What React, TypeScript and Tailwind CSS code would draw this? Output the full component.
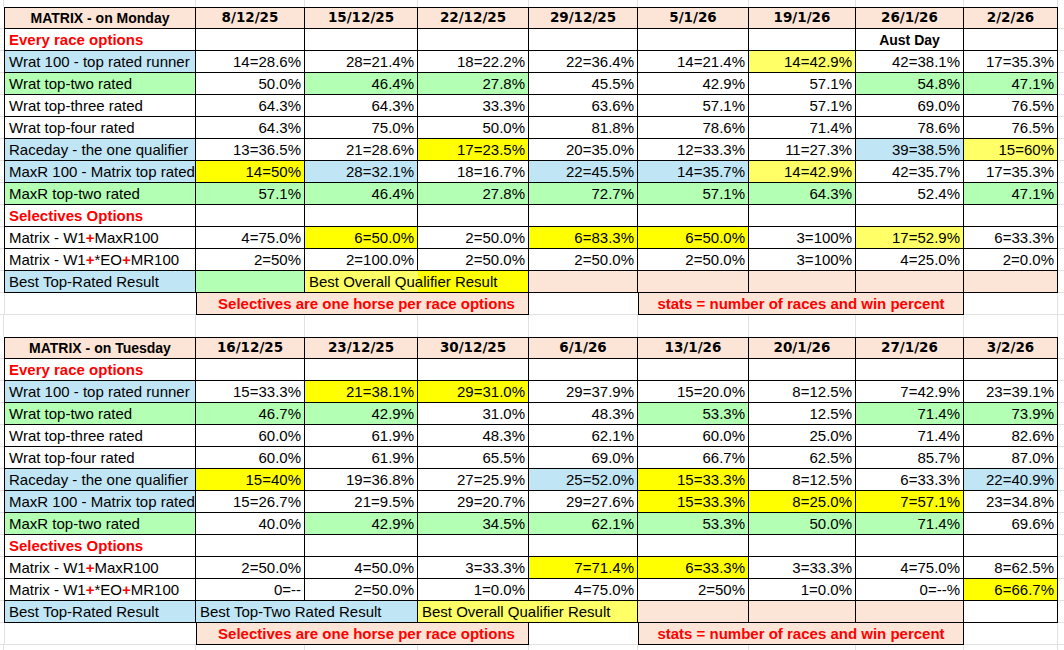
import React from 'react';

const BG: Record<string, string> = {
  y: 'bg-[#ffff00]',
  p: 'bg-[#ffff66]',
  b: 'bg-[#c0e6f5]',
  g: 'bg-[#b3ffb3]',
  k: 'bg-[#fce4d6]',
  w: 'bg-white',
};

const GRID =
  'grid grid-cols-[4px_192px_109px_113px_111px_109px_111px_107px_108px_94px_1fr]';

const BASE = 'h-[22px] flex items-center whitespace-nowrap';
const DATEF = "font-['DejaVu_Sans',sans-serif] font-bold text-[13.5px]";
const RED = 'text-[#ff0000] font-bold';

type Row = { label: React.ReactNode; lbg: string; cells: string[] };

const Plus = () => <span className={RED}>+</span>;

function Spacer({ h = 'h-[22px]' }: { h?: string }) {
  return <div className={`${h} border-b border-[#e1e1e1]`} />;
}

function DataCell({ s }: { s: string }) {
  let bg = 'bg-white';
  let t = s;
  const m = s.match(/^([ypbgk]):(.*)$/);
  if (m) {
    bg = BG[m[1]];
    t = m[2];
  }
  return (
    <div className={`${BASE} justify-end pr-[3px] border-r border-b border-black ${bg}`}>
      {t}
    </div>
  );
}

function LabelCell({ children, bg }: { children: React.ReactNode; bg: string }) {
  return (
    <div className={`${BASE} justify-start pl-[4px] border-l border-r border-b border-black ${bg}`}>
      {children}
    </div>
  );
}

function Table({
  title,
  dates,
  rows,
  variant,
}: {
  title: string;
  dates: string[];
  rows: Row[];
  variant: 'mon' | 'tue';
}) {
  const out: React.ReactNode[] = [];
  // header
  out.push(<Spacer key="h-l" />);
  out.push(
    <div
      key="h-t"
      className={`${BASE} justify-center border-l border-t border-r border-b border-black bg-[#fce4d6] font-bold text-[14px]`}
    >
      {title}
    </div>
  );
  dates.forEach((d, i) =>
    out.push(
      <div
        key={`h-${i}`}
        className={`${BASE} justify-center border-t border-r border-b border-black bg-[#fce4d6] ${DATEF}`}
      >
        {d}
      </div>
    )
  );
  out.push(<Spacer key="h-r" />);

  rows.forEach((r, ri) => {
    out.push(<Spacer key={`r${ri}-l`} />);
    out.push(
      <LabelCell key={`r${ri}-lab`} bg={r.lbg}>
        {r.label}
      </LabelCell>
    );
    r.cells.forEach((c, ci) => {
      if (c === 'AUST') {
        out.push(
          <div
            key={`r${ri}-${ci}`}
            className={`${BASE} justify-center border-r border-b border-black bg-white font-bold text-[14px]`}
          >
            Aust Day
          </div>
        );
      } else {
        out.push(<DataCell key={`r${ri}-${ci}`} s={c} />);
      }
    });
    out.push(<Spacer key={`r${ri}-r`} />);
  });

  // Best row
  out.push(<Spacer key="b-l" />);
  out.push(
    <LabelCell key="b-lab" bg={BG.b}>
      Best Top-Rated Result
    </LabelCell>
  );
  if (variant === 'mon') {
    out.push(<div key="b-1" className={`${BASE} border-r border-b border-black ${BG.g}`} />);
    out.push(
      <div
        key="b-2"
        className={`${BASE} col-span-2 justify-start pl-[4px] border-r border-b border-black bg-[linear-gradient(to_right,#ffff66_113px,#ffff00_113px)]`}
      >
        Best Overall Qualifier Result
      </div>
    );
    [0, 1, 2, 3, 4].forEach((i) =>
      out.push(<div key={`b-p${i}`} className={`${BASE} border-r border-b border-black ${BG.k}`} />)
    );
  } else {
    out.push(
      <div
        key="b-1"
        className={`${BASE} col-span-2 justify-start pl-[4px] border-r border-b border-black ${BG.b}`}
      >
        Best Top-Two Rated Result
      </div>
    );
    out.push(
      <div
        key="b-2"
        className={`${BASE} col-span-2 justify-start pl-[4px] border-r border-b border-black ${BG.p}`}
      >
        Best Overall Qualifier Result
      </div>
    );
    [0, 1, 2].forEach((i) =>
      out.push(<div key={`b-p${i}`} className={`${BASE} border-r border-b border-black ${BG.k}`} />)
    );
    out.push(<div key="b-w" className={`${BASE} border-r border-b border-black bg-white`} />);
  }
  out.push(<Spacer key="b-r" />);

  // notes row
  out.push(<Spacer key="n-l" />);
  out.push(<div key="n-0" className="h-[22px] border-l border-b border-[#e1e1e1]" />);
  out.push(
    <div
      key="n-1"
      className={`${BASE} col-span-3 justify-center border-l border-r border-b border-black ${BG.k} ${RED} pl-[8px]`}
    >
      Selectives are one horse per race options
    </div>
  );
  out.push(<div key="n-2" className="h-[22px] border-b border-[#e1e1e1]" />);
  out.push(
    <div
      key="n-3"
      className={`${BASE} col-span-3 justify-center border-l border-r border-b border-black ${BG.k} ${RED}`}
    >
      stats = number of races and win percent
    </div>
  );
  out.push(<div key="n-4" className="h-[22px] border-r border-b border-[#e1e1e1]" />);
  out.push(<Spacer key="n-r" />);

  return <>{out}</>;
}

function GridStrip({ h, k }: { h: string; k: string }) {
  const cells: React.ReactNode[] = [];
  cells.push(<div key={`${k}-l`} className={`${h} border-r border-[#e1e1e1]`} />);
  for (let i = 0; i < 9; i++) {
    cells.push(<div key={`${k}-${i}`} className={`${h} border-r border-[#e1e1e1]`} />);
  }
  cells.push(<div key={`${k}-r`} className={h} />);
  return <>{cells}</>;
}

const monRows: Row[] = [
  { label: <span className={RED}>Every race options</span>, lbg: BG.w, cells: ['', '', '', '', '', '', 'AUST', ''] },
  {
    label: 'Wrat 100 - top rated runner',
    lbg: BG.b,
    cells: ['14=28.6%', '28=21.4%', '18=22.2%', '22=36.4%', '14=21.4%', 'p:14=42.9%', '42=38.1%', '17=35.3%'],
  },
  {
    label: 'Wrat top-two rated',
    lbg: BG.g,
    cells: ['50.0%', 'g:46.4%', 'g:27.8%', '45.5%', '42.9%', '57.1%', 'g:54.8%', 'g:47.1%'],
  },
  {
    label: 'Wrat top-three rated',
    lbg: BG.w,
    cells: ['64.3%', '64.3%', '33.3%', '63.6%', '57.1%', '57.1%', '69.0%', '76.5%'],
  },
  {
    label: 'Wrat top-four rated',
    lbg: BG.w,
    cells: ['64.3%', '75.0%', '50.0%', '81.8%', '78.6%', '71.4%', '78.6%', '76.5%'],
  },
  {
    label: 'Raceday - the one qualifier',
    lbg: BG.b,
    cells: ['13=36.5%', '21=28.6%', 'y:17=23.5%', '20=35.0%', '12=33.3%', '11=27.3%', 'b:39=38.5%', 'p:15=60%'],
  },
  {
    label: 'MaxR 100 - Matrix top rated',
    lbg: BG.b,
    cells: ['y:14=50%', 'b:28=32.1%', '18=16.7%', 'b:22=45.5%', 'b:14=35.7%', 'p:14=42.9%', '42=35.7%', '17=35.3%'],
  },
  {
    label: 'MaxR top-two rated',
    lbg: BG.g,
    cells: ['g:57.1%', 'g:46.4%', 'g:27.8%', 'g:72.7%', 'g:57.1%', 'g:64.3%', '52.4%', 'g:47.1%'],
  },
  { label: <span className={RED}>Selectives Options</span>, lbg: BG.w, cells: ['', '', '', '', '', '', '', ''] },
  {
    label: (
      <span>
        Matrix - W1<Plus />MaxR100
      </span>
    ),
    lbg: BG.w,
    cells: ['4=75.0%', 'y:6=50.0%', '2=50.0%', 'y:6=83.3%', 'y:6=50.0%', '3=100%', 'p:17=52.9%', '6=33.3%'],
  },
  {
    label: (
      <span>
        Matrix - W1<Plus />*EO<Plus />MR100
      </span>
    ),
    lbg: BG.w,
    cells: ['2=50%', '2=100.0%', '2=50.0%', '2=50.0%', '2=50.0%', '3=100%', '4=25.0%', '2=0.0%'],
  },
];

const tueRows: Row[] = [
  { label: <span className={RED}>Every race options</span>, lbg: BG.w, cells: ['', '', '', '', '', '', '', ''] },
  {
    label: 'Wrat 100 - top rated runner',
    lbg: BG.b,
    cells: ['15=33.3%', 'y:21=38.1%', 'y:29=31.0%', '29=37.9%', '15=20.0%', '8=12.5%', '7=42.9%', '23=39.1%'],
  },
  {
    label: 'Wrat top-two rated',
    lbg: BG.g,
    cells: ['g:46.7%', 'g:42.9%', '31.0%', '48.3%', 'g:53.3%', '12.5%', 'g:71.4%', 'g:73.9%'],
  },
  {
    label: 'Wrat top-three rated',
    lbg: BG.w,
    cells: ['60.0%', '61.9%', '48.3%', '62.1%', '60.0%', '25.0%', '71.4%', '82.6%'],
  },
  {
    label: 'Wrat top-four rated',
    lbg: BG.w,
    cells: ['60.0%', '61.9%', '65.5%', '69.0%', '66.7%', '62.5%', '85.7%', '87.0%'],
  },
  {
    label: 'Raceday - the one qualifier',
    lbg: BG.b,
    cells: ['y:15=40%', '19=36.8%', '27=25.9%', 'b:25=52.0%', 'y:15=33.3%', '8=12.5%', '6=33.3%', 'b:22=40.9%'],
  },
  {
    label: 'MaxR 100 - Matrix top rated',
    lbg: BG.b,
    cells: ['15=26.7%', '21=9.5%', '29=20.7%', '29=27.6%', 'y:15=33.3%', 'y:8=25.0%', 'y:7=57.1%', '23=34.8%'],
  },
  {
    label: 'MaxR top-two rated',
    lbg: BG.g,
    cells: ['40.0%', 'g:42.9%', 'g:34.5%', 'g:62.1%', 'g:53.3%', 'g:50.0%', 'g:71.4%', '69.6%'],
  },
  { label: <span className={RED}>Selectives Options</span>, lbg: BG.w, cells: ['', '', '', '', '', '', '', ''] },
  {
    label: (
      <span>
        Matrix - W1<Plus />MaxR100
      </span>
    ),
    lbg: BG.w,
    cells: ['2=50.0%', '4=50.0%', '3=33.3%', 'y:7=71.4%', 'y:6=33.3%', '3=33.3%', '4=75.0%', '8=62.5%'],
  },
  {
    label: (
      <span>
        Matrix - W1<Plus />*EO<Plus />MR100
      </span>
    ),
    lbg: BG.w,
    cells: ['0=--', '2=50.0%', '1=0.0%', '4=75.0%', '2=50%', '1=0.0%', '0=--%', 'y:6=66.7%'],
  },
];

export default function App() {
  return (
    <div className="w-[1064px] h-[650px] overflow-hidden bg-white text-black font-['Liberation_Sans',Arial,sans-serif] text-[15px] leading-none">
      <div className={GRID}>
        <GridStrip h="h-[7px]" k="top" />
        <Table
          title="MATRIX - on Monday"
          dates={['8/12/25', '15/12/25', '22/12/25', '29/12/25', '5/1/26', '19/1/26', '26/1/26', '2/2/26']}
          rows={monRows}
          variant="mon"
        />
        <GridStrip h="h-[22px]" k="gap" />
        <Table
          title="MATRIX - on Tuesday"
          dates={['16/12/25', '23/12/25', '30/12/25', '6/1/26', '13/1/26', '20/1/26', '27/1/26', '3/2/26']}
          rows={tueRows}
          variant="tue"
        />
        <GridStrip h="h-[5px]" k="bot" />
      </div>
    </div>
  );
}
